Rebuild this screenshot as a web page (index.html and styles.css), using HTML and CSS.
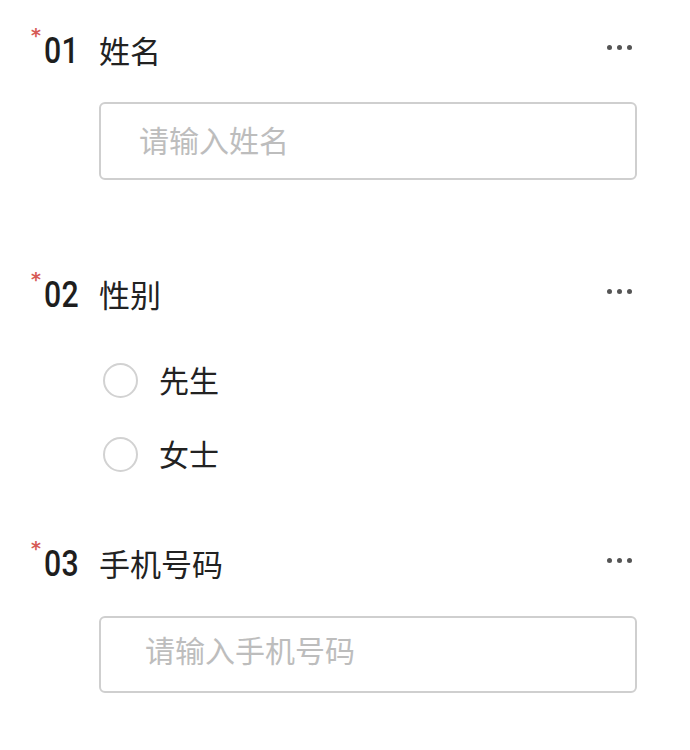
FILE: index.html
```html
<!DOCTYPE html>
<html lang="zh-CN">
<head>
<meta charset="utf-8">
<link rel="stylesheet" href="styles.css">
</head>
<body>
<div class="form">
  <section class="field field-first">
    <div class="field-head">
      <span class="req">*</span>
      <span class="num"><span class="num-in">01</span></span>
      <span class="label">姓名</span>
      <span class="more"><i></i><i></i><i></i></span>
    </div>
    <div class="input input-name"><span class="ph">请输入姓名</span></div>
  </section>

  <section class="field field-gender">
    <div class="field-head">
      <span class="req">*</span>
      <span class="num"><span class="num-in">02</span></span>
      <span class="label">性别</span>
      <span class="more"><i></i><i></i><i></i></span>
    </div>
    <div class="options">
      <div class="option"><span class="radio"></span><span class="opt-text">先生</span></div>
      <div class="option"><span class="radio"></span><span class="opt-text">女士</span></div>
    </div>
  </section>

  <section class="field field-phone">
    <div class="field-head">
      <span class="req">*</span>
      <span class="num"><span class="num-in">03</span></span>
      <span class="label">手机号码</span>
      <span class="more"><i></i><i></i><i></i></span>
    </div>
    <div class="input input-phone"><span class="ph">请输入手机号码</span></div>
  </section>
</div>
</body>
</html>
```

FILE: styles.css
```css
html, body {
  margin: 0;
  padding: 0;
  background: #ffffff;
}
body {
  width: 690px;
  height: 750px;
  overflow: hidden;
  font-family: "Noto Sans CJK SC", "Noto Sans", sans-serif;
  color: #222222;
}
.form {
  padding: 30px 53px 0 30px;
}
.field-head {
  display: flex;
  align-items: center;
  height: 42px;
}
.req {
  align-self: flex-start;
  width: 13px;
  height: 14px;
  margin-top: -5px;
  color: #d65a55;
  font-family: "DejaVu Sans", sans-serif;
  font-weight: bold;
  font-size: 19px;
  line-height: 20px;
  padding-left: 1px;
}
.num {
  width: 56px;
  height: 42px;
  display: flex;
  align-items: center;
}
.num-in {
  display: inline-block;
  font-family: "Roboto", sans-serif;
  font-weight: 500;
  font-size: 36px;
  line-height: 42px;
  color: #1e1e1e;
  transform: scaleX(0.84);
  transform-origin: left center;
  letter-spacing: 0.5px;
}
.label {
  flex: 1;
  font-size: 31px;
  line-height: 42px;
  color: #222222;
  margin-left: -1px;
  padding-bottom: 3px;
}
.more {
  display: flex;
  gap: 5px;
  margin-top: -8px;
  margin-right: 5px;
}
.more i {
  display: block;
  width: 5px;
  height: 5px;
  border-radius: 50%;
  background: #555555;
}
.input {
  margin-left: 69px;
  height: 74px;
  border: 2px solid #cfcfcf;
  border-radius: 6px;
  display: flex;
  align-items: center;
  box-sizing: content-box;
}
.input-name {
  margin-top: 30px;
  padding-left: 38px;
}
.input-phone {
  margin-top: 31px;
  height: 73px;
  padding-left: 44px;
}
.ph {
  font-size: 30px;
  color: #bdbdbd;
  line-height: 40px;
  padding-bottom: 4px;
}
.input-phone .ph {
  padding-bottom: 12px;
}
.field-gender {
  margin-top: 94px;
}
.options {
  margin-top: 27px;
  padding-left: 73px;
}
.option {
  height: 74px;
  display: flex;
  align-items: center;
}
.radio {
  width: 31px;
  height: 31px;
  border: 2.5px solid #d2d2d2;
  border-radius: 50%;
  margin-right: 21px;
}
.opt-text {
  font-size: 30px;
  color: #222222;
  line-height: 40px;
  padding-bottom: 2px;
}
.field-phone {
  margin-top: 52px;
}
```
